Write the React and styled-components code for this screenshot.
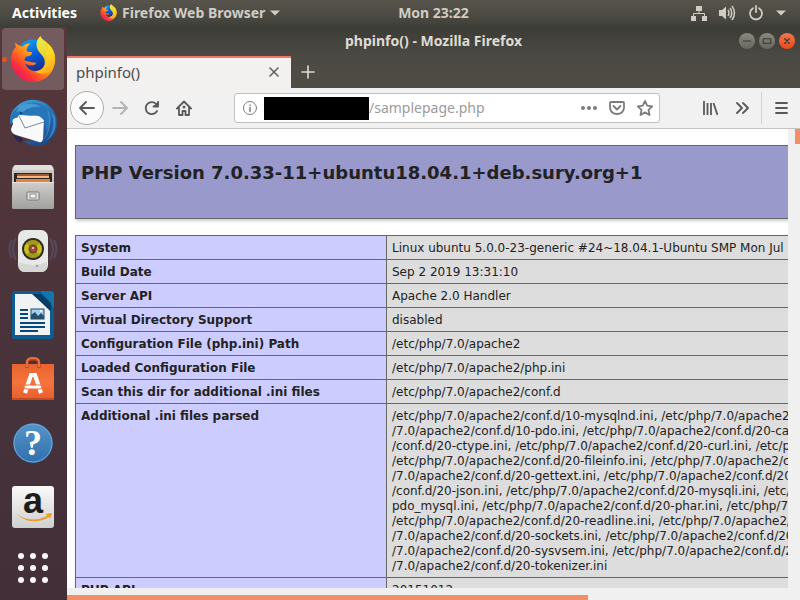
import React from "react";
import styled, { createGlobalStyle, css } from "styled-components";

const Global = createGlobalStyle`
  *, *::before, *::after { box-sizing: border-box; }
  body { margin: 0; background: #45323a; }
  button, input { font: inherit; color: inherit; }
`;

const uiFont = `"Noto Sans", "Open Sans", sans-serif`;

const Desktop = styled.div`
  display: flex;
  flex-direction: column;
  height: 100vh;
  overflow: hidden;
  font-family: ${uiFont};
`;

const bare = css`
  display: flex;
  align-items: center;
  justify-content: center;
  padding: 0;
  border: 0;
  background: none;
`;

/* ---------- top panel ---------- */

const Panel = styled.header`
  display: grid;
  grid-template-columns: 67px minmax(0, 1fr) auto minmax(0, 1fr);
  align-items: center;
  flex: none;
  height: 27px;
  padding-bottom: 2px;
  background: linear-gradient(#58554c, #45453f 80%, #3d3d38);
  color: #dfdbd2;
  font-size: 14px;
  font-weight: 700;
  line-height: 20px;
`;

const PanelStart = styled.div`
  grid-column: 1 / 3;
  display: flex;
  align-items: center;
  gap: 23px;
  padding-left: 12px;
`;

const PanelButton = styled.button`
  ${bare}
  gap: 5px;
  white-space: nowrap;
  color: ${(p) => (p.$bright ? "#ffffff" : "#d0ccc3")};
`;

const StatusArea = styled.div`
  display: flex;
  justify-content: flex-end;
  align-items: center;
  gap: 12px;
  padding-right: 14px;
`;

/* ---------- dock ---------- */

const Workspace = styled.div`
  display: flex;
  flex: 1;
  min-height: 0;
`;

const Dock = styled.nav`
  display: flex;
  flex-direction: column;
  flex: none;
  gap: 2px;
  width: 67px;
  padding: 1px 3px 0 2px;
  background: linear-gradient(#56373a, #4f353a 30%, #46323b 70%, #432f37);
`;

const DockItem = styled.button`
  ${bare}
  position: relative;
  flex: none;
  height: ${(p) => (p.$short ? 56 : 62)}px;
  border-radius: 4px;
  background: ${(p) => (p.$active ? "#745c5e" : "transparent")};
`;

const RunningDot = styled.span`
  position: absolute;
  left: 0;
  width: 5px;
  height: 5px;
  border-radius: 50%;
  background: #e95420;
`;

/* ---------- browser window ---------- */

const Window = styled.main`
  display: flex;
  flex-direction: column;
  flex: 1;
  min-width: 0;
  background: #f1f1f1;
`;

const TitleBar = styled.div`
  display: grid;
  grid-template-columns: 1fr auto 1fr;
  align-items: center;
  flex: none;
  height: 29px;
  padding: 0 5px 2px 0;
  background: linear-gradient(#3c3c37, #4b4943);
  color: #dfdbd2;
`;

const WindowTitle = styled.div`
  grid-column: 2;
  padding-left: 5px;
  font-size: 14px;
  font-weight: 700;
  line-height: 20px;
`;

const WindowControls = styled.div`
  display: flex;
  justify-content: flex-end;
  gap: 4px;
`;

const RoundButton = styled.button`
  ${bare}
  width: 16px;
  height: 16px;
  border-radius: 50%;
  color: #3a3935;
  background: ${(p) =>
    p.$close ? "linear-gradient(#f4774c, #e8491c)" : "linear-gradient(#8b897f, #67665f)"};
`;

const TabStrip = styled.div`
  display: flex;
  flex: none;
  height: 32px;
  background: linear-gradient(#4b4943, #504d45);
`;

const Tab = styled.div`
  display: flex;
  align-items: center;
  justify-content: space-between;
  width: 224px;
  padding: 0 9px 2px;
  border-top: 2px solid #f0756a;
  background: #f2f1f0;
  color: #4c4c4c;
  font-size: 15px;
  line-height: 20px;
`;

const TabButton = styled.button`
  ${bare}
  width: ${(p) => (p.$wide ? 34 : 16)}px;
`;

const Toolbar = styled.div`
  display: flex;
  align-items: center;
  flex: none;
  height: 41px;
  padding-left: 3px;
  border-bottom: 1px solid #c6c4c2;
  background: #f2f1f1;
  color: #59595b;
`;

const ToolButton = styled.button`
  ${bare}
  flex: none;
  width: 32px;
  height: 32px;
  opacity: ${(p) => (p.disabled ? 0.4 : 1)};
`;

const BackButton = styled(ToolButton)`
  width: 34px;
  height: 34px;
  border: 1px solid #aeacaa;
  border-radius: 50%;
  background: #fbfbfb;
`;

const MenuButton = styled(ToolButton)`
  width: 39px;
  margin-left: 3px;
  border-left: 1px solid #d5d3d1;
`;

const AddressBar = styled.div`
  display: flex;
  align-items: center;
  flex: 1;
  min-width: 0;
  height: 30px;
  margin: 0 34px;
  padding-left: 1px;
  border: 1px solid #c2c0be;
  border-radius: 3px;
  background: #ffffff;
  color: #7c7c7d;
`;

const AddressButton = styled.button`
  ${bare}
  flex: none;
  width: 28px;
  height: 28px;
`;

const Redaction = styled.span`
  flex: none;
  width: 105px;
  height: 23px;
  background: #000000;
`;

const AddressInput = styled.input`
  flex: 1;
  min-width: 0;
  padding: 0;
  border: 0;
  outline: 0;
  background: none;
  color: #9b9b9b;
  font-size: 14px;
  line-height: 20px;
`;

/* ---------- page ---------- */

const Viewport = styled.div`
  display: grid;
  grid-template: minmax(0, 1fr) 12px / minmax(0, 1fr) 12px;
  flex: 1;
  min-height: 0;
  background: #f0f0f0;
`;

const Page = styled.article`
  overflow: hidden;
  padding: 16px 8px;
  background: #ffffff;
  color: #222222;
  font-family: "DejaVu Sans", sans-serif;
  font-size: 12px;
  line-height: 15px;
`;

const VerticalTrack = styled.div`
  padding-left: 7px;
`;

const HorizontalTrack = styled.div`
  padding-top: 7px;
`;

const Thumb = styled.div`
  width: ${(p) => p.$width};
  height: ${(p) => p.$height};
  background: #f09064;
`;

const VersionBox = styled.header`
  width: 982px;
  padding: 4px 5px;
  border: 1px solid #666666;
  background: #9999cc;
  box-shadow: 1px 2px 3px #cccccc;
`;

const VersionHeading = styled.h1`
  margin: 12px 0 31px;
  font-size: 18px;
  font-weight: 700;
  line-height: 21px;
`;

const InfoTable = styled.table`
  width: 982px;
  margin-top: 16px;
  border-collapse: collapse;
  table-layout: fixed;
  box-shadow: 1px 2px 3px #cccccc;
`;

const cell = css`
  padding: 5px 5px 3px;
  border: 1px solid #666666;
  text-align: left;
  vertical-align: top;
`;

const NameCell = styled.th`
  ${cell}
  width: 311px;
  background: #ccccff;
`;

const ValueCell = styled.td`
  ${cell}
  background: #dddddd;
`;

const ValueLine = styled.div`
  white-space: nowrap;
`;

/* ---------- drawings ---------- */

const Line = ({ size = 16, width = 1.8, children, ...rest }) => (
  <svg width={size} height={size} viewBox="0 0 16 16" fill="none" stroke="currentColor"
    strokeWidth={width} strokeLinecap="round" strokeLinejoin="round" aria-hidden="true" {...rest}>
    {children}
  </svg>
);

const Caret = () => (
  <svg width="10" height="6" viewBox="0 0 10 6" aria-hidden="true">
    <path d="M0 0.500h10L5 5.500z" fill="currentColor" />
  </svg>
);

const FirefoxLogo = ({ size, id }) => (
  <svg width={size} height={size} viewBox="0 0 46 46" aria-hidden="true">
    <defs>
      <linearGradient id={`${id}-body`} x1="0.9" y1="0.1" x2="0.15" y2="0.85">
        <stop offset="0" stopColor="#ffe226" />
        <stop offset="0.35" stopColor="#ffb31a" />
        <stop offset="0.62" stopColor="#ff6a1f" />
        <stop offset="0.85" stopColor="#fb2c3f" />
        <stop offset="1" stopColor="#e5205f" />
      </linearGradient>
      <linearGradient id={`${id}-globe`} x1="0.3" y1="0" x2="0.6" y2="1">
        <stop offset="0" stopColor="#129df5" />
        <stop offset="0.55" stopColor="#0b55cf" />
        <stop offset="1" stopColor="#1c2a86" />
      </linearGradient>
      <linearGradient id={`${id}-flame`} x1="0.3" y1="0" x2="0.8" y2="1">
        <stop offset="0" stopColor="#fff53d" />
        <stop offset="0.5" stopColor="#ffdc22" />
        <stop offset="1" stopColor="#ffa31a" />
      </linearGradient>
    </defs>
    <circle cx="23" cy="20" r="16.500" fill={`url(#${id}-globe)`} />
    <path d="M5.500 6.500C5 9 5.500 10.500 6 11C2 15 1 20 1 24C1 36 11 46 23 46C35 46 45 36 45 24C45 18 43 12 38 8C39 11 38 14 36 15C38 24 36 34 26 35C20 35.500 16 31 15.500 27.500C18 29.500 22 30 25 28.500C26.500 27.500 26 26.500 24.500 26.500C21.500 27 19 25 16 25C14 24.500 14 22 16.500 20.500C18 20 20 20 21 19C22 18 22.500 16.500 21.500 16.300C19 16 17 16 16.500 14.500C16.300 12 18.500 9 20.500 7.500C17 7 14 8.500 12.500 10.500C10 10 7 9 5.500 6.500Z"
      fill={`url(#${id}-body)`} />
    <path d="M30.500 0C26.500 4 25.500 8 27.500 13C29 17 33.500 19 34.500 24C36 31 31 35 25 35.500C30 38.500 37 39 42 33C45 29 45.500 24 45 20C44 13 39 8 35 5C32.500 3 31 2 30.500 0Z"
      fill={`url(#${id}-flame)`} opacity="0.92" />
  </svg>
);

const ThunderbirdLogo = () => (
  <svg width="50" height="50" viewBox="0 0 50 50" aria-hidden="true">
    <defs>
      <linearGradient id="tb" x1="0.2" y1="0" x2="0.8" y2="1">
        <stop offset="0" stopColor="#3f9fdc" />
        <stop offset="0.5" stopColor="#246fb2" />
        <stop offset="1" stopColor="#1b4484" />
      </linearGradient>
    </defs>
    <path d="M3 26C1 20 3 13 8 9C13 4 20 1 27 2C40 3 49 13 49 25C49 37 41 48 29 48C24 48 19 46 16 43L34 42L36 24L12 18Z" fill="url(#tb)" />
    <path d="M5 36L15 41L13 45Q7 42 5 36Z" fill="#2b2257" />
    <path d="M4 18L9 20L11 17L35 18Q37 19 36 22L35 41Q34 45 31 44L8 37Q3 35 3 31L5 26Z" fill="#f8f9fb" />
    <path d="M11 18L17 30L36 24" fill="none" stroke="#7f8794" strokeWidth="1" />
    <path d="M3 28C0 18 6 9 13 10C18 3 30 3 38 10C45 17 44 27 38 34C39 26 36 19 28 17C22 18 16 17 11 17L8 20C5 20 3 24 3 28Z" fill="#2776ba" />
    <path d="M8 14C13 5 25 3 33 9C26 8 19 10 15 14C12 13 10 13 8 14Z" fill="#5cb2e2" opacity="0.6" />
    <path d="M43 14C47 22 46 34 38 43C47 37 50 26 46 17Z" fill="#4a94d2" opacity="0.7" />
    <path d="M40 13C43 22 42 33 36 41" fill="none" stroke="#5a9fd6" opacity="0.6" />
    <circle cx="13" cy="15" r="1" fill="#0b3162" />
  </svg>
);

const FilesLogo = () => (
  <svg width="44" height="46" viewBox="0 0 44 46" aria-hidden="true">
    <defs>
      <linearGradient id="files" x1="0" y1="0" x2="0" y2="1">
        <stop offset="0" stopColor="#cfcecb" /><stop offset="1" stopColor="#a0a09e" />
      </linearGradient>
    </defs>
    <path d="M4 1H40Q43 3 43 7V43Q43 45 41 45H3Q1 45 1 43V7Q1 3 4 1Z" fill="url(#files)" />
    <path d="M4 1H40Q42 3 42 6H2Q2 3 4 1Z" fill="#e0dfdc" />
    <path d="M3 9H41V19H3Z" fill="#2e2622" />
    <path d="M6 10H38V12H6Z" fill="#9a5a34" />
    <path d="M6 12H38V14H6Z" fill="#f6b67a" />
    <path d="M5 15H39V18H5Z" fill="#df8245" />
    <path d="M1 18H43V43Q43 45 41 45H3Q1 45 1 43Z" fill="url(#files)" />
    <path d="M1 18.500H43" stroke="#e4e3e0" />
    <rect x="16" y="28" width="12" height="8" rx="1" fill="#e4e3e1" stroke="#777775" />
    <rect x="19" y="30" width="6" height="4" fill="#f6f6f5" stroke="#8a8a88" />
  </svg>
);

const RhythmboxLogo = () => (
  <svg width="52" height="46" viewBox="0 0 52 46" aria-hidden="true">
    <g fill="none" stroke="#6b7fb0" strokeWidth="2" opacity="0.3">
      <path d="M9 10Q3 20 9 32M5 12Q0 20 5 30M43 10Q49 20 43 32M47 12Q52 20 47 30" />
    </g>
    <rect x="11" y="2" width="30" height="42" rx="7" fill="#e8e8e6" />
    <path d="M12 34Q26 40 40 34V38Q40 44 34 44H18Q12 44 12 38Z" fill="#d6d6d4" />
    <circle cx="26" cy="21" r="11" fill="#2c2c24" />
    <circle cx="26" cy="21" r="9" fill="#cbbd1c" />
    <path d="M26 21L19 15Q26 9 33 15ZM26 21L19 27Q26 33 33 27Z" fill="#968a17" opacity="0.7" />
    <circle cx="26" cy="21" r="4.500" fill="#5b531c" />
    <circle cx="26" cy="21" r="2.800" fill="#b9424e" />
    <circle cx="26" cy="20" r="1" fill="#ffdadd" />
    <circle cx="30" cy="38" r="1" fill="#8d8d8d" />
  </svg>
);

const WriterLogo = () => (
  <svg width="42" height="48" viewBox="0 0 42 48" aria-hidden="true">
    <path d="M3 0H28L42 15V45Q42 48 39 48H3Q0 48 0 45V3Q0 0 3 0Z" fill="#0d5d92" />
    <path d="M28 0H39Q42 0 42 3V17Z" fill="#1275ab" />
    <path d="M3 3H21L38 20V44H3Z" fill="#f0f2f3" />
    <path d="M20 3L39 20V12L29 3Z" fill="#063d68" />
    <g fill="#064a7b">
      <path d="M8 18H16V20H8ZM8 22H16V24H8ZM8 26H16V28H8ZM8 31H33V33H8ZM8 35H33V37H8ZM8 39H26V41H8Z" />
    </g>
    <rect x="19" y="18" width="13" height="10" fill="#a5d0e8" stroke="#164e75" />
    <path d="M19 28V24L23 21L26 25L29 22L32 25V28Z" fill="#24506c" />
    <circle cx="29" cy="20" r="1" fill="#fff" />
  </svg>
);

const SoftwareLogo = () => (
  <svg width="42" height="44" viewBox="0 0 42 44" aria-hidden="true">
    <defs>
      <linearGradient id="bag" x1="0" y1="0" x2="0" y2="1">
        <stop offset="0" stopColor="#e9632f" /><stop offset="0.5" stopColor="#f4743c" /><stop offset="1" stopColor="#e95d2e" />
      </linearGradient>
    </defs>
    <path d="M0 7H42V43H0Z" fill="url(#bag)" />
    <path d="M0 41H42V43H0Z" fill="#c44a20" />
    <path d="M15 11V6Q15 2 21 2Q27 2 27 6V11" fill="none" stroke="#b9441d" strokeWidth="3" />
    <path d="M15 10V5Q15 1 21 1Q27 1 27 5V10" fill="none" stroke="#e8703f" strokeWidth="2" />
    <path d="M13 36L19 18H23L29 36" fill="none" stroke="#fff" strokeWidth="4" />
    <rect x="12" y="28" width="18" height="4" rx="2" fill="#fff" stroke="#ed6935" />
  </svg>
);

const HelpLogo = () => (
  <svg width="42" height="42" viewBox="0 0 42 42" aria-hidden="true">
    <defs>
      <linearGradient id="help" x1="0" y1="0" x2="0" y2="1">
        <stop offset="0" stopColor="#5593c8" /><stop offset="1" stopColor="#3270ae" />
      </linearGradient>
    </defs>
    <circle cx="21" cy="21" r="20" fill="#2a5b8f" />
    <circle cx="21" cy="21" r="19" fill="url(#help)" stroke="#7bb0da" />
    <text x="21" y="33" textAnchor="middle" fontFamily="Liberation Serif, serif" fontSize="36" fontWeight="700" fill="#fff">?</text>
  </svg>
);

const AmazonLogo = () => (
  <svg width="42" height="42" viewBox="0 0 42 42" overflow="visible" aria-hidden="true">
    <defs>
      <linearGradient id="amz" x1="0" y1="0" x2="0" y2="1">
        <stop offset="0" stopColor="#fafafa" /><stop offset="1" stopColor="#cfcfcf" />
      </linearGradient>
    </defs>
    <rect width="42" height="42" rx="3" fill="url(#amz)" />
    <text x="21" y="27" textAnchor="middle" fontFamily="Liberation Sans, sans-serif" fontSize="36" fontWeight="700" fill="#1c1c1c">a</text>
    <path d="M4 28Q20 38 35 30L34 28L40 27L38 33L37 31Q20 41 4 28Z" fill="#f19a23" />
  </svg>
);

const AppsGrid = () => (
  <svg width="30" height="30" viewBox="0 0 30 30" fill="#fbf4f6" aria-hidden="true">
    {[3, 15, 27].map((y) => [3, 15, 27].map((x) => <circle key={`${x}-${y}`} cx={x} cy={y} r="3" />))}
  </svg>
);

const NetworkIcon = () => (
  <svg width="16" height="16" viewBox="0 0 16 16" aria-hidden="true">
    <path d="M5 1H11V6H5ZM0 11H5V16H0ZM11 11H16V16H11Z" fill="currentColor" />
    <path d="M8 6V8.500M2.500 11V8.500H13.500V11" fill="none" stroke="currentColor" />
  </svg>
);

const SoundIcon = () => (
  <svg width="17" height="16" viewBox="0 0 17 16" aria-hidden="true">
    <path d="M0 5H3L7 1.500V14.500L3 11H0Z" fill="currentColor" />
    <path d="M9 5Q11 8 9 11M11 3Q14.500 8 11 13M13 1Q18 8 13 15" fill="none" stroke="currentColor" strokeWidth="1.500" />
  </svg>
);

/* ---------- data ---------- */

const dockApps = [
  ["Firefox Web Browser", <FirefoxLogo size={46} id="dock" />],
  ["Thunderbird Mail", <ThunderbirdLogo />],
  ["Files", <FilesLogo />],
  ["Rhythmbox", <RhythmboxLogo />],
  ["LibreOffice Writer", <WriterLogo />],
  ["Ubuntu Software", <SoftwareLogo />],
  ["Help", <HelpLogo />],
  ["Amazon", <AmazonLogo />],
  ["Show Applications", <AppsGrid />],
];

const rows = [
  ["System", ["Linux ubuntu 5.0.0-23-generic #24~18.04.1-Ubuntu SMP Mon Jul"]],
  ["Build Date", ["Sep 2 2019 13:31:10"]],
  ["Server API", ["Apache 2.0 Handler"]],
  ["Virtual Directory Support", ["disabled"]],
  ["Configuration File (php.ini) Path", ["/etc/php/7.0/apache2"]],
  ["Loaded Configuration File", ["/etc/php/7.0/apache2/php.ini"]],
  ["Scan this dir for additional .ini files", ["/etc/php/7.0/apache2/conf.d"]],
  ["Additional .ini files parsed", [
    "/etc/php/7.0/apache2/conf.d/10-mysqlnd.ini, /etc/php/7.0/apache2/conf.d",
    "/7.0/apache2/conf.d/10-pdo.ini, /etc/php/7.0/apache2/conf.d/20-calendar.ini",
    "/conf.d/20-ctype.ini, /etc/php/7.0/apache2/conf.d/20-curl.ini, /etc/php",
    "/etc/php/7.0/apache2/conf.d/20-fileinfo.ini, /etc/php/7.0/apache2/conf.d",
    "/7.0/apache2/conf.d/20-gettext.ini, /etc/php/7.0/apache2/conf.d/20-iconv.ini",
    "/conf.d/20-json.ini, /etc/php/7.0/apache2/conf.d/20-mysqli.ini, /etc/php",
    "pdo_mysql.ini, /etc/php/7.0/apache2/conf.d/20-phar.ini, /etc/php/7.0",
    "/etc/php/7.0/apache2/conf.d/20-readline.ini, /etc/php/7.0/apache2/conf.d",
    "/7.0/apache2/conf.d/20-sockets.ini, /etc/php/7.0/apache2/conf.d/20-sysvmsg.ini",
    "/7.0/apache2/conf.d/20-sysvsem.ini, /etc/php/7.0/apache2/conf.d/20-sysvshm.ini",
    "/7.0/apache2/conf.d/20-tokenizer.ini",
  ]],
  ["PHP API", ["20151012"]],
];

export default function App() {
  return (
    <Desktop>
      <Global />
      <Panel>
        <PanelStart>
          <PanelButton $bright>Activities</PanelButton>
          <PanelButton><FirefoxLogo size={17} id="panel" />Firefox Web Browser<Caret /></PanelButton>
        </PanelStart>
        <PanelButton>Mon 23:22</PanelButton>
        <StatusArea>
          <PanelButton aria-label="Network"><NetworkIcon /></PanelButton>
          <PanelButton aria-label="Volume"><SoundIcon /></PanelButton>
          <PanelButton aria-label="Power">
            <Line><path d="M5 3.300A6 6 0 1 0 11 3.300M8 1V7" /></Line>
          </PanelButton>
          <PanelButton aria-label="System menu"><Caret /></PanelButton>
        </StatusArea>
      </Panel>

      <Workspace>
        <Dock aria-label="Dock">
          {dockApps.map(([name, icon], i) => (
            <DockItem key={name} aria-label={name} $active={i === 0} $short={i === dockApps.length - 1}>
              {i === 0 && <RunningDot />}
              {icon}
            </DockItem>
          ))}
        </Dock>

        <Window>
          <TitleBar>
            <WindowTitle>phpinfo() - Mozilla Firefox</WindowTitle>
            <WindowControls>
              <RoundButton aria-label="Minimize"><Line size={12} width={1.5}><path d="M3 8H13" /></Line></RoundButton>
              <RoundButton aria-label="Maximize"><Line size={12} width={1.5}><path d="M3 5H13V11H3Z" /></Line></RoundButton>
              <RoundButton aria-label="Close" $close><Line size={12}><path d="M5 5L11 11M11 5L5 11" /></Line></RoundButton>
            </WindowControls>
          </TitleBar>

          <TabStrip>
            <Tab>
              phpinfo()
              <TabButton aria-label="Close tab"><Line color="#626262" width={1.6}><path d="M4 4L12 12M12 4L4 12" /></Line></TabButton>
            </Tab>
            <TabButton $wide aria-label="New tab">
              <Line color="#dedbd5" width={1.6}><path d="M2 8H14M8 2V14" /></Line>
            </TabButton>
          </TabStrip>

          <Toolbar>
            <BackButton aria-label="Back"><Line><path d="M15 8H1M7 2L1 8L7 14" /></Line></BackButton>
            <ToolButton disabled aria-label="Forward"><Line><path d="M1 8H15M9 2L15 8L9 14" /></Line></ToolButton>
            <ToolButton aria-label="Reload">
              <Line><path d="M13 11A6 6 0 1 1 12.500 4.500M14 2V6.500H9.500" /><path d="M14.500 2V6.500H10Z" fill="currentColor" strokeWidth="1" /></Line>
            </ToolButton>
            <ToolButton aria-label="Home">
              <Line><path d="M1 8.500L8 1.500L15 8.500M3 8V15H6.500V11H9.500V15H13V8" /><circle cx="8" cy="7" r="0.600" /></Line>
            </ToolButton>
            <AddressBar>
              <AddressButton aria-label="Site information">
                <Line width={1}><circle cx="8" cy="8" r="6.500" /><path d="M8 7.500V11.500M8 5V5.200" strokeWidth="1.500" /></Line>
              </AddressButton>
              <Redaction />
              <AddressInput aria-label="Address" defaultValue="/samplepage.php" />
              <AddressButton aria-label="Page actions">
                <Line><g fill="currentColor" stroke="none"><circle cx="2" cy="8" r="2" /><circle cx="8" cy="8" r="2" /><circle cx="14" cy="8" r="2" /></g></Line>
              </AddressButton>
              <AddressButton aria-label="Save to Pocket">
                <Line><path d="M2 2H14Q15 2 15 3V8Q14 14 8 14Q2 14 1 8V3Q1 2 2 2ZM4.500 6L8 9.500L11.500 6" /></Line>
              </AddressButton>
              <AddressButton aria-label="Bookmark this page">
                <Line><path d="M8 1L10.200 5.700L15.200 6.300L11.500 9.800L12.500 15L8 12.400L3.500 15L4.500 9.800L0.800 6.300L5.800 5.700Z" /></Line>
              </AddressButton>
            </AddressBar>
            <ToolButton aria-label="Library"><Line strokeLinecap="butt"><path d="M2 1V15M5.500 3V15M9 3V15M11.500 3L15.500 15" /></Line></ToolButton>
            <ToolButton aria-label="More tools"><Line><path d="M3 3L8 8L3 13M9 3L14 8L9 13" /></Line></ToolButton>
            <MenuButton aria-label="Open menu"><Line><path d="M3 3H14M3 8H14M3 13H14" /></Line></MenuButton>
          </Toolbar>

          <Viewport>
            <Page>
              <VersionBox>
                <VersionHeading>PHP Version 7.0.33-11+ubuntu18.04.1+deb.sury.org+1</VersionHeading>
              </VersionBox>
              <InfoTable>
                <tbody>
                  {rows.map(([name, lines]) => (
                    <tr key={name}>
                      <NameCell scope="row">{name}</NameCell>
                      <ValueCell>{lines.map((line) => <ValueLine key={line}>{line}</ValueLine>)}</ValueCell>
                    </tr>
                  ))}
                </tbody>
              </InfoTable>
            </Page>
            <VerticalTrack><Thumb $width="5px" $height="15px" /></VerticalTrack>
            <HorizontalTrack><Thumb $width="calc(72% + 2px)" $height="5px" /></HorizontalTrack>
          </Viewport>
        </Window>
      </Workspace>
    </Desktop>
  );
}
